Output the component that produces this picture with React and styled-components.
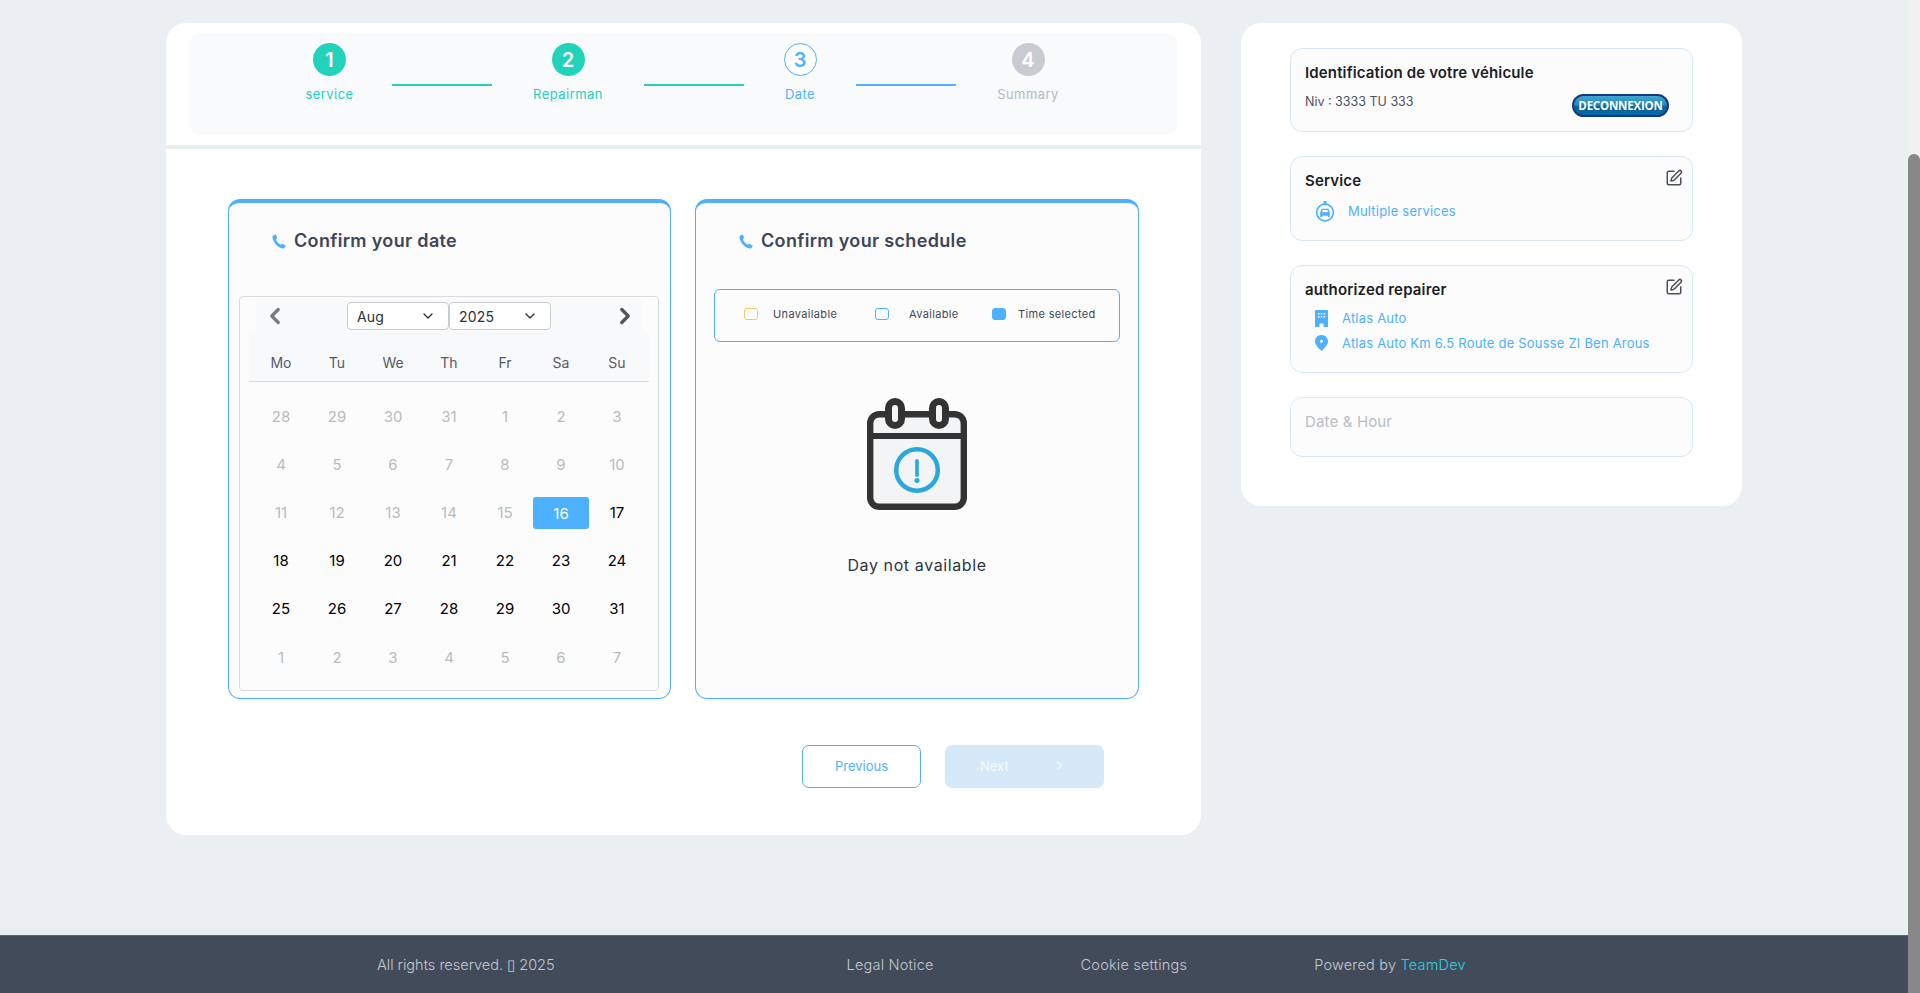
import React from "react";
import styled, { createGlobalStyle } from "styled-components";
import { SquarePen, ChevronDown, ChevronLeft, ChevronRight } from "lucide-react";

const GlobalStyle = createGlobalStyle`
  html, body {
    margin: 0;
    padding: 0;
    height: 993px;
    overflow: hidden;
    background: #eaeff2;
    font-family: "Inter", "Liberation Sans", sans-serif;
  }
  * { box-sizing: border-box; }
`;

const Page = styled.div`
  display: flex;
  width: 1920px;
  height: 993px;
`;

const Content = styled.div`
  flex: 1;
  display: flex;
  flex-direction: column;
  min-width: 0;
`;

const ScrollTrack = styled.div`
  width: 12px;
  background: #f1f1f1;
  padding-top: 154px;
`;

const ScrollThumb = styled.div`
  height: 100%;
  background: #888;
  border-radius: 6px 6px 0 0;
`;

const Main = styled.main`
  flex: 1;
  display: flex;
  align-items: flex-start;
  gap: 40px;
  padding: 23px 0 0 166px;
`;

const WizardCard = styled.section`
  width: 1035px;
  height: 812px;
  background: #fff;
  border-radius: 20px;
`;

const StepperWrap = styled.div`
  padding: 10px 24px;
  border-bottom: 4px solid #e8f0ef;
  height: 126px;
`;

const Stepper = styled.div`
  display: flex;
  justify-content: center;
  align-items: flex-start;
  height: 102px;
  padding-top: 10px;
  background: #f8fafc;
  border-radius: 10px;
`;

const Step = styled.div`
  width: ${(p) => p.$width}px;
  display: flex;
  flex-direction: column;
  align-items: center;
`;

const stepColors = { done: "#22d3bb", active: "#4db1ff", todo: "#b5b8be" };

const StepCircle = styled.div`
  width: 33px;
  height: 33px;
  border-radius: 50%;
  display: flex;
  align-items: center;
  justify-content: center;
  font-size: 20px;
  font-weight: 600;
  background: ${(p) => (p.$state === "active" ? "#fff" : p.$state === "done" ? "#22d3bb" : "#c8cbd1")};
  color: ${(p) => (p.$state === "active" ? "#4db1ff" : "#fff")};
  border: ${(p) => (p.$state === "active" ? "1px solid #4db1ff" : "none")};
`;

const StepLabel = styled.div`
  margin-top: 10px;
  font-size: 13px;
  line-height: 17px;
  letter-spacing: 0.45px;
  color: ${(p) => stepColors[p.$state]};
`;

const StepLine = styled.div`
  width: 100px;
  height: 2px;
  margin-top: 41px;
  background: ${(p) => p.$color};
`;

const WizardBody = styled.div`
  padding: 50px 0 0 62px;
`;

const Panels = styled.div`
  display: flex;
  gap: 24px;
`;

const Panel = styled.div`
  width: ${(p) => p.$width}px;
  height: 500px;
  background: #fcfcfd;
  border: 1px solid #4db1ff;
  border-top-width: 4px;
  border-radius: 12px;
`;

const PanelTitle = styled.h2`
  margin: 0;
  padding: 25px 0 0 43px;
  display: flex;
  align-items: center;
  gap: 7px;
  font-size: 18px;
  font-weight: 600;
  line-height: 26px;
  letter-spacing: 0.33px;
  color: #3d4657;
`;

const PhoneIcon = () => (
  <svg width="15" height="15" viewBox="0 0 15 15">
    <path
      d="M1.200 1.700 3 .6c.4-.2.8 0 1 .4l1.100 2.400c.2.4 0 .7-.3 1l-.9.9c.8 2.300 2.600 4.400 4.800 5.500l1.100-.8c.4-.2.7-.2 1 0l2.500 1.400c.3.200.4.600.2 1l-.8 1.300c-.4.600-1 .9-1.700.8C5.400 13.800 1.300 8.400.4 3.200c-.1-.6.3-1.200.8-1.500z"
      fill="#4db1ff"
    />
  </svg>
);

const CalendarBox = styled.div`
  margin: 42px 11px 0 10px;
  height: 395px;
  padding-top: 3px;
  border: 1px solid #d9dbde;
  border-radius: 4px;
`;

const CalendarNav = styled.div`
  margin: 0 16px;
  height: 32px;
  padding: 0 4px 0 6px;
  background: #f8f9fb;
  display: flex;
  align-items: center;
  justify-content: space-between;
`;

const NavSelects = styled.div`
  display: flex;
  margin-left: -2px;
`;

const MonthSelect = styled.div`
  width: 102px;
  height: 28px;
  padding: 0 12px 0 9px;
  background: #fff;
  border: 1px solid #c9ccd3;
  border-radius: 4px;
  display: flex;
  align-items: center;
  justify-content: space-between;
  font-size: 14px;
  letter-spacing: 0.2px;
  color: #2b2f38;
`;

const WeekHead = styled.div`
  margin: 0 9px;
  padding: 12px 4px 0;
  height: 50px;
  background: #f8f9fb;
  border-bottom: 1px solid #d9dbde;
  display: grid;
  grid-template-columns: repeat(7, 56px);
  align-items: center;
  justify-items: center;
  font-size: 14px;
  color: #555b66;
`;

const DayGrid = styled.div`
  margin: 10px 13px 0;
  display: grid;
  grid-template-columns: repeat(7, 56px);
  grid-auto-rows: 48.2px;
`;

const Day = styled.div`
  display: flex;
  align-items: center;
  justify-content: center;
  font-size: 15px;
  color: ${(p) => (p.$muted ? "#b6bcc0" : "#000")};
`;

const DaySelected = styled.span`
  width: 56px;
  height: 32px;
  margin-top: 2px;
  display: flex;
  align-items: center;
  justify-content: center;
  border-radius: 3px;
  background: #4db1ff;
  color: #fff;
`;

const Legend = styled.div`
  margin: 35px 18px 0;
  height: 53px;
  padding-bottom: 4px;
  border: 1px solid #4db1ff;
  border-radius: 6px;
  display: flex;
  align-items: center;
  font-size: 11px;
  letter-spacing: 0.35px;
  color: #3d4657;
`;

const LegendItem = styled.div`
  width: ${(p) => p.$width}px;
  padding-left: ${(p) => p.$pad}px;
  display: flex;
  align-items: center;
  gap: ${(p) => p.$gap}px;
  white-space: nowrap;
`;

const Swatch = styled.span`
  width: 14px;
  height: 12px;
  border-radius: 3px;
  border: 1px solid ${(p) => p.$color};
  background: ${(p) => (p.$filled ? p.$color : "transparent")};
`;

const EmptyState = styled.div`
  margin-top: 56px;
  display: flex;
  flex-direction: column;
  align-items: center;
`;

const EmptyText = styled.p`
  margin: 43px 0 0;
  font-size: 16px;
  line-height: 24px;
  letter-spacing: 0.6px;
  color: #2f3642;
`;

const CalendarAlert = () => (
  <svg width="100" height="112" viewBox="0 0 100 112">
    <rect x="3.200" y="16.200" width="93.600" height="92.600" rx="9" fill="#f3f4f5" stroke="#333" strokeWidth="6.400" />
    <rect x="0" y="35" width="100" height="6" fill="#333" />
    <rect x="21.500" y="3.500" width="13" height="24" rx="6.500" fill="#f3f4f5" stroke="#333" strokeWidth="7" />
    <rect x="65.500" y="3.500" width="13" height="24" rx="6.500" fill="#f3f4f5" stroke="#333" strokeWidth="7" />
    <circle cx="50" cy="72" r="20.800" fill="none" stroke="#2aa7dc" strokeWidth="4.500" />
    <rect x="48.200" y="61" width="3.600" height="18" rx="1.800" fill="#2aa7dc" />
    <circle cx="50" cy="82.500" r="2.500" fill="#2aa7dc" />
  </svg>
);

const Actions = styled.div`
  margin-top: 46px;
  padding-right: 97px;
  display: flex;
  justify-content: flex-end;
  gap: 24px;
`;

const PrevButton = styled.button`
  width: 119px;
  height: 43px;
  padding: 0 0 2px;
  background: #fff;
  border: 1px solid #4db1ff;
  border-radius: 7px;
  font: 400 13px "Inter", "Liberation Sans", sans-serif;
  color: #4db1ff;
`;

const NextButton = styled.button`
  width: 159px;
  height: 43px;
  padding: 0 37px 2px 35px;
  background: #d6e9f9;
  border: none;
  border-radius: 7px;
  display: flex;
  align-items: center;
  justify-content: space-between;
  font: 400 13px "Inter", "Liberation Sans", sans-serif;
  color: #f4f9fd;
`;

const SummaryCard = styled.aside`
  width: 501px;
  height: 483px;
  padding: 25px 49px 0;
  background: #fff;
  border-radius: 20px;
  display: flex;
  flex-direction: column;
  gap: 24px;
`;

const InfoBox = styled.div`
  position: relative;
  height: ${(p) => p.$height}px;
  padding: 13px 14px 0;
  background: #fcfcfd;
  border: 1px solid #d8e6fb;
  border-radius: 12px;
`;

const InfoTitle = styled.h3`
  margin: 0;
  font-size: 15px;
  font-weight: ${(p) => (p.$muted ? 400 : 600)};
  line-height: 22px;
  letter-spacing: 0.15px;
  color: ${(p) => (p.$muted ? "#b9bcc4" : "#1b1e25")};
`;

const EditButton = styled.span`
  position: absolute;
  top: 12px;
  right: 9px;
  display: flex;
  color: #4a4f5a;
`;

const VehicleRow = styled.div`
  margin-top: 8px;
  display: flex;
  align-items: flex-start;
  justify-content: space-between;
  padding-right: 9px;
  font-size: 12.5px;
  line-height: 20px;
  color: #4a5160;
`;

const Deconnexion = styled.span`
  margin-top: 2px;
  width: 97px;
  height: 23px;
  display: flex;
  align-items: center;
  justify-content: center;
  border-radius: 12px;
  border: 2px solid #15397f;
  background: linear-gradient(#3fa6cf 0%, #2488bb 45%, #06609c 58%, #0a6aa5 100%);
  font: 700 11.5px "Open Sans", "Liberation Sans", sans-serif;
  letter-spacing: -0.2px;
  color: #fff;
`;

const InfoRow = styled.div`
  display: flex;
  align-items: center;
  height: 24px;
  margin-top: ${(p) => p.$top}px;
  padding-left: 10px;
  gap: ${(p) => p.$gap}px;
  font-size: 13px;
  letter-spacing: 0.2px;
  color: #4db1ff;
  white-space: nowrap;
`;

const TaxiIcon = () => (
  <svg width="20" height="21" viewBox="0 0 20 21">
    <circle cx="10" cy="11.500" r="8.400" fill="none" stroke="#4db1ff" strokeWidth="1.600" />
    <rect x="8.400" y="0" width="3.200" height="4.200" rx="1" fill="#4db1ff" />
    <path d="M6.700 7.800h6.600l1.500 3.500v4.700h-2v-1.300H7.200V16h-2v-4.700z" fill="#4db1ff" />
    <rect x="7.300" y="9" width="5.400" height="2.200" fill="#fff" />
  </svg>
);

const BuildingIcon = () => (
  <svg width="13" height="17" viewBox="0 0 13 17">
    <path
      fillRule="evenodd"
      fill="#4db1ff"
      d="M1 0h11a1 1 0 0 1 1 1v16H8.500v-3.500h-4V17H0V1a1 1 0 0 1 1-1zM3 3v1.500h1.500V3zm2.800 0v1.500h1.500V3zm2.800 0v1.500h1.500V3zM3 6v1.500h1.500V6zm2.800 0v1.500h1.500V6zm2.800 0v1.500h1.500V6z"
    />
  </svg>
);

const PinIcon = () => (
  <svg width="13" height="16" viewBox="0 0 13 16">
    <path
      fillRule="evenodd"
      fill="#4db1ff"
      d="M6.500 0C10 0 13 2.800 13 6.300 13 10 9 13.800 6.500 16 4 13.800 0 10 0 6.300 0 2.800 3 0 6.500 0zm0 4.700a1.600 1.600 0 1 0 0 3.200 1.600 1.600 0 0 0 0-3.200z"
    />
  </svg>
);

const Footer = styled.footer`
  height: 58px;
  flex-shrink: 0;
  background: #414b5a;
  border-top: 1px solid #5d6673;
  display: flex;
  align-items: center;
  font-size: 14.5px;
  font-weight: 300;
  color: #c5c9d0;
`;

const FooterItem = styled.span`
  margin-left: ${(p) => p.$left}px;
  letter-spacing: ${(p) => p.$spacing || 0}px;
  white-space: nowrap;
`;

const TeamDev = styled.span`
  color: #2dd4e0;
`;

const steps = [
  { n: 1, label: "service", state: "done", width: 125 },
  { n: 2, label: "Repairman", state: "done", width: 152 },
  { n: 3, label: "Date", state: "active", width: 112 },
  { n: 4, label: "Summary", state: "todo", width: 144 },
];

const lineColors = ["#22d3bb", "#22d3bb", "#4db1ff"];

const days = [
  [28, 1], [29, 1], [30, 1], [31, 1], [1, 1], [2, 1], [3, 1],
  [4, 1], [5, 1], [6, 1], [7, 1], [8, 1], [9, 1], [10, 1],
  [11, 1], [12, 1], [13, 1], [14, 1], [15, 1], [16, 2], [17, 0],
  [18, 0], [19, 0], [20, 0], [21, 0], [22, 0], [23, 0], [24, 0],
  [25, 0], [26, 0], [27, 0], [28, 0], [29, 0], [30, 0], [31, 0],
  [1, 1], [2, 1], [3, 1], [4, 1], [5, 1], [6, 1], [7, 1],
];

export default function App() {
  return (
    <>
      <GlobalStyle />
      <Page>
        <Content>
          <Main>
            <WizardCard>
              <StepperWrap>
                <Stepper>
                  {steps.map((s, i) => (
                    <React.Fragment key={s.n}>
                      <Step $width={s.width}>
                        <StepCircle $state={s.state}>{s.n}</StepCircle>
                        <StepLabel $state={s.state}>{s.label}</StepLabel>
                      </Step>
                      {i < 3 && <StepLine $color={lineColors[i]} />}
                    </React.Fragment>
                  ))}
                </Stepper>
              </StepperWrap>
              <WizardBody>
                <Panels>
                  <Panel $width={443}>
                    <PanelTitle>
                      <PhoneIcon />
                      Confirm your date
                    </PanelTitle>
                    <CalendarBox>
                      <CalendarNav>
                        <ChevronLeft size={26} strokeWidth={3} color="#7a7a7a" />
                        <NavSelects>
                          <MonthSelect>
                            Aug <ChevronDown size={16} />
                          </MonthSelect>
                          <MonthSelect>
                            2025 <ChevronDown size={16} />
                          </MonthSelect>
                        </NavSelects>
                        <ChevronRight size={26} strokeWidth={3} color="#555" />
                      </CalendarNav>
                      <WeekHead>
                        {["Mo", "Tu", "We", "Th", "Fr", "Sa", "Su"].map((d) => (
                          <span key={d}>{d}</span>
                        ))}
                      </WeekHead>
                      <DayGrid>
                        {days.map(([d, kind], i) => (
                          <Day key={i} $muted={kind === 1}>
                            {kind === 2 ? <DaySelected>{d}</DaySelected> : d}
                          </Day>
                        ))}
                      </DayGrid>
                    </CalendarBox>
                  </Panel>
                  <Panel $width={444}>
                    <PanelTitle>
                      <PhoneIcon />
                      Confirm your schedule
                    </PanelTitle>
                    <Legend>
                      <LegendItem $width={159} $pad={29} $gap={15}>
                        <Swatch $color="#f7c56b" />
                        Unavailable
                      </LegendItem>
                      <LegendItem $width={118} $pad={1} $gap={20}>
                        <Swatch $color="#4db1ff" />
                        Available
                      </LegendItem>
                      <LegendItem $width={120} $pad={0} $gap={12}>
                        <Swatch $color="#4db1ff" $filled />
                        Time selected
                      </LegendItem>
                    </Legend>
                    <EmptyState>
                      <CalendarAlert />
                      <EmptyText>Day not available</EmptyText>
                    </EmptyState>
                  </Panel>
                </Panels>
                <Actions>
                  <PrevButton>Previous</PrevButton>
                  <NextButton>
                    Next
                    <ChevronRight size={15} />
                  </NextButton>
                </Actions>
              </WizardBody>
            </WizardCard>
            <SummaryCard>
              <InfoBox $height={84}>
                <InfoTitle>Identification de votre véhicule</InfoTitle>
                <VehicleRow>
                  Niv : 3333 TU 333
                  <Deconnexion>DECONNEXION</Deconnexion>
                </VehicleRow>
              </InfoBox>
              <InfoBox $height={85}>
                <InfoTitle>Service</InfoTitle>
                <EditButton>
                  <SquarePen size={18} />
                </EditButton>
                <InfoRow $top={7} $gap={13}>
                  <TaxiIcon />
                  Multiple services
                </InfoRow>
              </InfoBox>
              <InfoBox $height={108}>
                <InfoTitle>authorized repairer</InfoTitle>
                <EditButton>
                  <SquarePen size={18} />
                </EditButton>
                <InfoRow $top={5} $gap={14}>
                  <BuildingIcon />
                  Atlas Auto
                </InfoRow>
                <InfoRow $top={1} $gap={14}>
                  <PinIcon />
                  Atlas Auto Km 6.5 Route de Sousse ZI Ben Arous
                </InfoRow>
              </InfoBox>
              <InfoBox $height={60}>
                <InfoTitle $muted>Date &amp; Hour</InfoTitle>
              </InfoBox>
            </SummaryCard>
          </Main>
          <Footer>
            <FooterItem $left={377}>All rights reserved. ▯ 2025</FooterItem>
            <FooterItem $left={292} $spacing={0.2}>Legal Notice</FooterItem>
            <FooterItem $left={147} $spacing={0.2}>Cookie settings</FooterItem>
            <FooterItem $left={127} $spacing={0.2}>
              Powered by <TeamDev>TeamDev</TeamDev>
            </FooterItem>
          </Footer>
        </Content>
        <ScrollTrack>
          <ScrollThumb />
        </ScrollTrack>
      </Page>
    </>
  );
}
